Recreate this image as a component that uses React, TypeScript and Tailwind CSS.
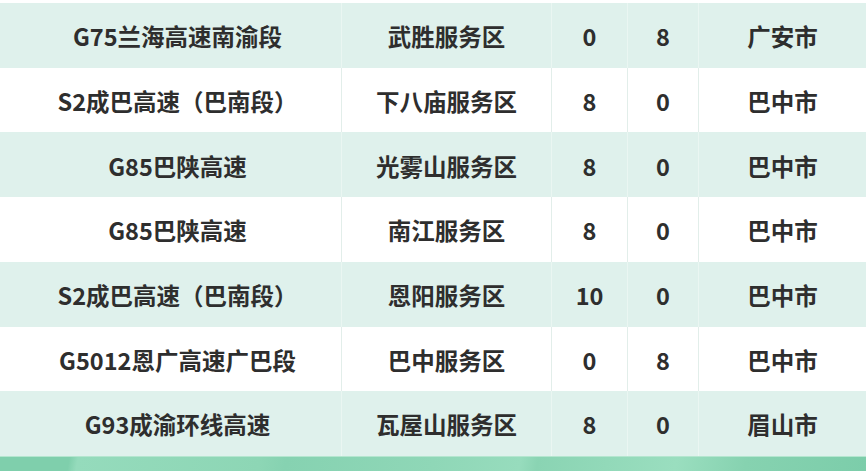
const rows = [
  { road: 'G75兰海高速南渝段', area: '武胜服务区', a: '0', b: '8', city: '广安市' },
  { road: 'S2成巴高速（巴南段）', area: '下八庙服务区', a: '8', b: '0', city: '巴中市' },
  { road: 'G85巴陕高速', area: '光雾山服务区', a: '8', b: '0', city: '巴中市' },
  { road: 'G85巴陕高速', area: '南江服务区', a: '8', b: '0', city: '巴中市' },
  { road: 'S2成巴高速（巴南段）', area: '恩阳服务区', a: '10', b: '0', city: '巴中市' },
  { road: 'G5012恩广高速广巴段', area: '巴中服务区', a: '0', b: '8', city: '巴中市' },
  { road: 'G93成渝环线高速', area: '瓦屋山服务区', a: '8', b: '0', city: '眉山市' },
];

export default function App() {
  return (
    <div
      className="w-[866px] h-[471px] bg-white overflow-hidden flex flex-col text-[#2e2e2e]"
      style={{ fontFamily: '"Noto Sans CJK SC", "Noto Sans", sans-serif' }}
    >
      <div className="h-[3px] shrink-0" />
      <div className="grid grid-rows-7 h-[453px] shrink-0">
        {rows.map((r, i) => {
          const green = i % 2 === 0;
          const line = green ? 'border-l border-[#eaf6f2]' : 'border-l border-[#e2eeea]';
          return (
            <div
              key={i}
              className={`grid grid-cols-[341px_210px_76px_71px_168px] text-[23.5px] font-bold leading-none ${
                green ? 'bg-[#dff1ec]' : 'bg-white'
              }`}
            >
              <div className="flex items-center justify-center pl-[14px] pt-[3px]">{r.road}</div>
              <div className={`flex items-center justify-center pt-[3px] ${line}`}>{r.area}</div>
              <div className={`flex items-center justify-center pt-[3px] ${line}`}>{r.a}</div>
              <div className={`flex items-center justify-center pt-[3px] ${line}`}>{r.b}</div>
              <div className={`flex items-center justify-center pt-[3px] ${line}`}>{r.city}</div>
            </div>
          );
        })}
      </div>
      <div className="flex-1 border-t border-[#b4e6cf] bg-[linear-gradient(100deg,#7fcfac_0%,#7fcfac_8%,#95dbbc_9%,#8dd6b5_30%,#86d2b1_33%,#8fd7b7_50%,#97dcbd_60%,#8ad4b3_62%,#9adebf_78%,#86d2b0_86%,#7ccdaa_100%)]" />
    </div>
  );
}
